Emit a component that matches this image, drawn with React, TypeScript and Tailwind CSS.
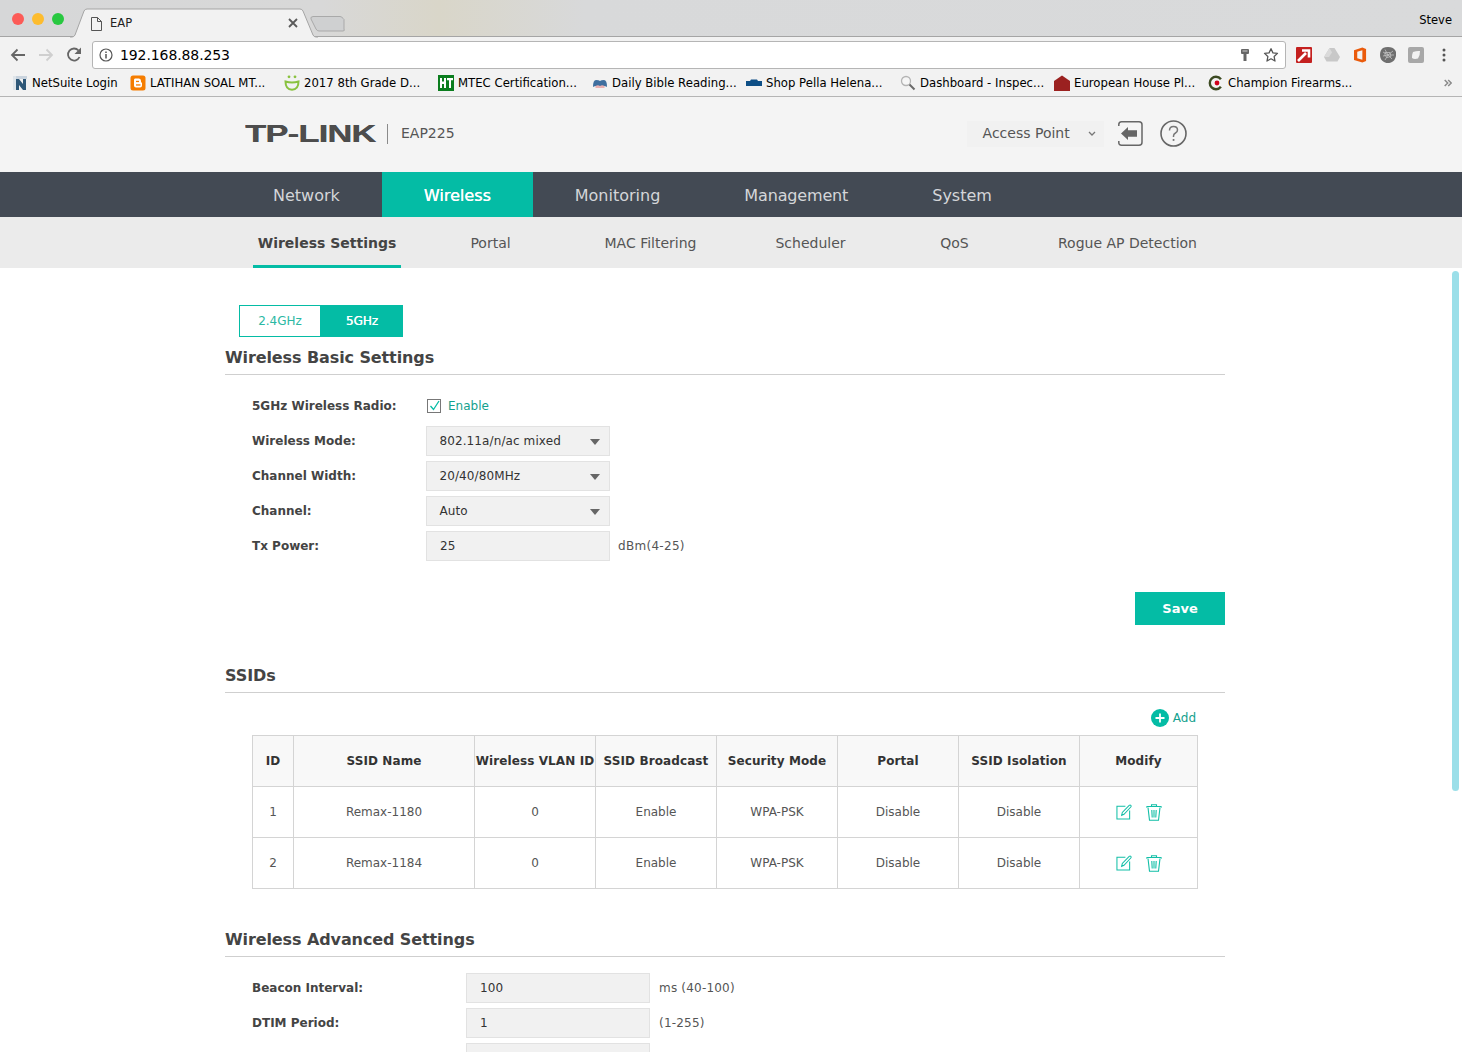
import React from "react";

const bookmarks = [
  { icon: "netsuite", label: "NetSuite Login", w: 118 },
  { icon: "blogger", label: "LATIHAN SOAL MT...", w: 154 },
  { icon: "smile", label: "2017 8th Grade D...", w: 154 },
  { icon: "ht", label: "MTEC Certification...", w: 154 },
  { icon: "bible", label: "Daily Bible Reading...", w: 154 },
  { icon: "pella", label: "Shop Pella Helena...", w: 154 },
  { icon: "search", label: "Dashboard - Inspec...", w: 154 },
  { icon: "house", label: "European House Pl...", w: 154 },
  { icon: "champion", label: "Champion Firearms...", w: 160 },
];

const FavIcon = ({ name }: { name: string }) => {
  switch (name) {
    case "netsuite":
      return (
        <svg width="16" height="16" viewBox="0 0 16 16">
          <rect x="1" y="1" width="14" height="3" fill="#c9d3dd" />
          <rect x="1" y="1" width="3" height="14" fill="#dfe5ea" />
          <path d="M4 4h3l4 5V4h3v11h-3L7 10v5H4z" fill="#2f5878" />
        </svg>
      );
    case "blogger":
      return (
        <svg width="16" height="16" viewBox="0 0 16 16">
          <rect x="0.5" y="0.5" width="15" height="15" rx="2.5" fill="#f57d00" />
          <path d="M5 3.500h4q2 0 2 2.500v1.500h1v3q0 2-2 2H6q-2 0-2-2V5q0-1.500 1-1.500z" fill="#fff" />
          <rect x="6" y="5.800" width="3" height="1.300" fill="#f57d00" />
          <rect x="6" y="9.300" width="4.500" height="1.300" fill="#f57d00" />
        </svg>
      );
    case "smile":
      return (
        <svg width="16" height="16" viewBox="0 0 16 16">
          <circle cx="5" cy="1.800" r="1.400" fill="#89c23f" />
          <circle cx="11" cy="1.800" r="1.400" fill="#89c23f" />
          <path d="M1.500 6.500q6.500 2 13 0q0 8-6.500 8.200Q1.500 14.500 1.500 6.500z" fill="none" stroke="#89c23f" strokeWidth="2" />
        </svg>
      );
    case "ht":
      return (
        <svg width="16" height="16" viewBox="0 0 16 16">
          <rect width="16" height="16" fill="#0b7d1e" />
          <path d="M2 3h2v3.500h2V3h2v10H6V9H4v4H2zM9 3h6v2.200h-2V13h-2V5.200H9z" fill="#fff" />
        </svg>
      );
    case "bible":
      return (
        <svg width="16" height="16" viewBox="0 0 16 16">
          <path d="M1 12q0-7 3-7t4 1q1-1 4-1t3 7q-3-2-7 0q-4-2-7 0z" fill="#3f6f9f" />
          <path d="M3.500 11q2.500-1.500 4.500 0q2-1.500 4.500 0v2h-9z" fill="#eab0b0" />
        </svg>
      );
    case "pella":
      return (
        <svg width="16" height="16" viewBox="0 0 16 16">
          <path d="M0 6h4l1-1.500h6L12 6h4v5H0z" fill="#0e4f86" />
        </svg>
      );
    case "search":
      return (
        <svg width="16" height="16" viewBox="0 0 16 16">
          <circle cx="6" cy="6" r="4.500" fill="#f6f6f6" stroke="#b4b4b4" strokeWidth="1.300" />
          <path d="M9.500 9.500l5 5" stroke="#6a6a6a" strokeWidth="2" />
        </svg>
      );
    case "house":
      return (
        <svg width="16" height="16" viewBox="0 0 16 16">
          <path d="M8 0.500L16 6v10H0V6z" fill="#9b2120" />
        </svg>
      );
    default:
      return (
        <svg width="16" height="16" viewBox="0 0 16 16">
          <circle cx="8" cy="8" r="6.200" fill="none" stroke="#3c4a22" strokeWidth="2.400" strokeDasharray="30 9" strokeDashoffset="-4" />
          <circle cx="9" cy="8" r="2.400" fill="#d0021b" />
        </svg>
      );
  }
};

const SelectBox = ({ value }: { value: string }) => (
  <div className="flex h-[30px] w-[184px] items-center justify-between border border-[#e2e2e2] bg-[#f1f1f1] pl-[12.5px] pr-[9px] text-[12px] tracking-[0.1px] text-[#333]">
    <span>{value}</span>
    <span className="mt-[2px] h-0 w-0 border-x-[5px] border-t-[6px] border-x-transparent border-t-[#666]" />
  </div>
);

const InputBox = ({ value }: { value: string }) => (
  <div className="flex h-[30px] w-[184px] items-center border border-[#e2e2e2] bg-[#f1f1f1] pl-[13px] text-[12px] tracking-[0.1px] text-[#333]">{value}</div>
);

const FormRow = ({ label, labelWidth, children }: { label: string; labelWidth: string; children: React.ReactNode }) => (
  <div className="flex h-[30px] items-center">
    <div className={`text-[12px] font-bold text-[#444] ${labelWidth}`}>{label}</div>
    {children}
  </div>
);

const SectionTitle = ({ children }: { children: React.ReactNode }) => (
  <h2 className="border-b border-[#cfcfcf] pt-[1px] pb-[4px] text-[16px] leading-[24px] font-bold tracking-[-0.1px] text-[#444]">{children}</h2>
);

const headers = ["ID", "SSID Name", "Wireless VLAN ID", "SSID Broadcast", "Security Mode", "Portal", "SSID Isolation", "Modify"];
const rows = [
  ["1", "Remax-1180", "0", "Enable", "WPA-PSK", "Disable", "Disable"],
  ["2", "Remax-1184", "0", "Enable", "WPA-PSK", "Disable", "Disable"],
];
const colWidths = ["w-[41px]", "w-[181px]", "w-[121px]", "w-[121px]", "w-[121px]", "w-[121px]", "w-[121px]", "w-[118px]"];

const EditIcon = () => (
  <svg width="16" height="16" viewBox="0 0 17 17" fill="none" stroke="#12bfa7" strokeWidth="1.100">
    <path d="M10 2.500H1v13.500h13.500V7" />
    <path d="M6 12l.7-3L14 1.500q1-.7 1.700 0t0 1.700L8.500 11z" />
  </svg>
);

const TrashIcon = () => (
  <svg width="16" height="17" viewBox="0 0 16 17" fill="none" stroke="#12bfa7" strokeWidth="1.100">
    <path d="M.5 3.500q0-1 1-1h13q1 0 1 1M5.500 2.500V.700h5v1.800M2 3.500l1.500 12.800h9L14 3.500" />
    <path d="M5.800 6l.4 7.500M8 6v7.500M10.200 6l-.4 7.500" />
  </svg>
);

export default function App() {
  return (
    <div className="relative h-[1052px] w-[1462px] overflow-hidden bg-white font-['DejaVu_Sans',sans-serif] text-[13px]">
      {/* title bar */}
      <div className="relative flex h-[37px] items-center justify-between border-b border-[#a5a5a5] bg-[linear-gradient(90deg,#d6d7d8_0%,#d8d8d8_22%,#d9d6c9_30%,#d8d9da_40%,#d9dadb_100%)] pl-[12px] pr-[10px] pt-[2px]">
        <div className="flex gap-[8px]">
          <span className="h-[12px] w-[12px] rounded-full bg-[#fc5b57]" />
          <span className="h-[12px] w-[12px] rounded-full bg-[#fdbc2e]" />
          <span className="h-[12px] w-[12px] rounded-full bg-[#28c840]" />
        </div>
        <span className="mt-[4px] text-[11.5px] text-black">Steve</span>
        <svg className="absolute left-[70px] top-[8px]" width="280" height="30" viewBox="0 0 280 30">
          <path d="M0 29h2q2 0 3-2L14 3q1-2 3-2h213q2 0 3 2l10 24q1 2 3 2h2" fill="#f2f2f2" stroke="#a5a5a5" />
          <path d="M243 8.500h27q2 0 3 2l1 1L274 21q1 2-1 2h-24q-2 0-3-2l-5-10q-1-2 2-2.500z" fill="#cfd0d1" stroke="#a9a9a9" />
        </svg>
        <div className="absolute left-[91px] top-[15px] flex items-center">
          <svg width="11" height="14" viewBox="0 0 11 14" fill="none" stroke="#555" strokeWidth="1">
            <path d="M.5.500h6l4 4v9H.5zM6.500.500v4h4" />
          </svg>
          <span className="ml-[8px] text-[11.5px] text-[#222]">EAP</span>
        </div>
        <svg className="absolute left-[288px] top-[18px]" width="10" height="10" viewBox="0 0 10 10" stroke="#5a5a5a" strokeWidth="1.800">
          <path d="M1 1l8 8M9 1l-8 8" />
        </svg>
      </div>

      {/* toolbar */}
      <div className="flex h-[33px] items-center bg-[#f2f2f2] pl-[10px] pr-[14px] pt-[3px]">
        <svg width="16" height="14" viewBox="0 0 16 14" fill="none" stroke="#666" strokeWidth="1.800">
          <path d="M15 7H2M7.500 1.500L2 7l5.500 5.500" />
        </svg>
        <svg className="ml-[12px]" width="16" height="14" viewBox="0 0 16 14" fill="none" stroke="#cfcfcf" strokeWidth="1.800">
          <path d="M1 7h13M8.500 1.500L14 7l-5.500 5.500" />
        </svg>
        <svg className="ml-[12px]" width="16" height="16" viewBox="0 0 16 16" fill="none">
          <path d="M13.500 10A6 6 0 1 1 12.500 3.500" stroke="#666" strokeWidth="1.800" />
          <path d="M15 0.500v6.500H8.500z" fill="#666" />
        </svg>
        <div className="ml-[10px] flex h-[28px] w-[1194px] items-center rounded-[3px] border border-[#b5b5b5] bg-white pl-[6px] pr-[6px]">
          <svg width="14" height="14" viewBox="0 0 14 14" fill="none" stroke="#555">
            <circle cx="7" cy="7" r="6" strokeWidth="1.200" />
            <path d="M7 6v4.500M7 3.500v1.500" strokeWidth="1.500" />
          </svg>
          <span className="ml-[7px] text-[14px] tracking-[-0.1px] text-black">192.168.88.253</span>
          <svg className="ml-auto" width="10" height="14" viewBox="0 0 10 14">
            <path d="M2 1h6q1 0 1 1v3q0 1-1 1H6.500v7h-3V6H2q-1 0-1-1V2q0-1 1-1z" fill="#666" />
            <rect x="2.500" y="2.500" width="5" height="1" fill="#ccc" />
          </svg>
          <svg className="ml-[13px]" width="16" height="16" viewBox="0 0 24 24" fill="none" stroke="#555" strokeWidth="1.900" strokeLinejoin="round">
            <path d="M12 2.500l2.900 6.300 6.800.8-5 4.700 1.300 6.800-6-3.400-6 3.400 1.300-6.800-5-4.700 6.800-.8z" />
          </svg>
        </div>
        <svg className="ml-[10px]" width="16" height="16" viewBox="0 0 16 16">
          <rect width="16" height="16" rx="1" fill="#c4201f" />
          <path d="M2 14L10 6M6 3.500h7v7" stroke="#fff" strokeWidth="2.600" fill="none" />
        </svg>
        <svg className="ml-[12px]" width="16" height="14" viewBox="0 0 16 14">
          <path d="M5.500 0h5l5.500 9-2.500 4.500h-11L0 9z" fill="#c8c8c8" />
          <path d="M5.500 0L8 4.500 5 9H0z" fill="#dadada" />
        </svg>
        <svg className="ml-[14px]" width="13" height="16" viewBox="0 0 14 16">
          <path d="M0 3l9-3 4 1.500v13L9 16l-9-2.500zM3.500 4.500v7l5.500 1.500V3z" fill="#ea5b0c" fillRule="evenodd" />
        </svg>
        <svg className="ml-[13px]" width="16" height="16" viewBox="0 0 16 16">
          <path d="M8 0q5 0 7 3t1 6q-1 5-5 6.500T4 15Q0 13 0 8t3-7q2-1 5-1z" fill="#6f6f6f" />
          <path d="M3 5l5 3 5-4M8 8l-3 5M8 8l4 4M5 2.500L8 8M8 8l6 0M3 9l5-1M5 5.500h5l1 4-4 1-2-2z" stroke="#c2c2c2" strokeWidth="0.800" fill="none" />
        </svg>
        <svg className="ml-[12px]" width="16" height="16" viewBox="0 0 16 16">
          <rect width="16" height="16" rx="2" fill="#a8a8a8" />
          <path d="M5 5q4-1.500 7-1 0 5-2 7.500-4 1-6-.5 0-4 1-6z" fill="#f2f2f2" />
        </svg>
        <svg className="ml-[18px]" width="4" height="14" viewBox="0 0 4 14" fill="#555">
          <circle cx="2" cy="2" r="1.500" />
          <circle cx="2" cy="7" r="1.500" />
          <circle cx="2" cy="12" r="1.500" />
        </svg>
      </div>

      {/* bookmarks */}
      <div className="flex h-[27px] items-center border-b border-[#b5b5b5] bg-[#f2f2f2] pl-[12px] text-[11.7px] text-black">
        {bookmarks.map((b) => (
          <div key={b.label} className="flex shrink-0 items-center gap-[4px]" style={{ width: b.w }}>
            <FavIcon name={b.icon} />
            <span className="pt-[2px] whitespace-nowrap">{b.label}</span>
          </div>
        ))}
        <svg className="ml-auto mr-[10px]" width="8" height="8" viewBox="0 0 8 8" fill="none" stroke="#8a8a8a" strokeWidth="1.500">
          <path d="M.7 1l3 3-3 3M4.200 1l3 3-3 3" />
        </svg>
      </div>

      {/* device header */}
      <header className="flex h-[75px] items-center bg-[#f4f4f4] pb-[2px] pl-[245px]">
        <span className="w-[130px] shrink-0 origin-left [transform:scaleX(1.43)] font-['Liberation_Sans',sans-serif] text-[24px] leading-none font-bold tracking-[-0.5px] whitespace-nowrap text-[#4d4d4d] [text-shadow:0.4px_0_0_#4d4d4d]">TP-LINK</span>
        <span className="ml-[12px] h-[20px] w-px bg-[#8a8a8a]" />
        <span className="ml-[13px] text-[14px] text-[#555]">EAP225</span>
        <div className="ml-[512px] flex h-[26px] w-[137px] items-center bg-[#f1f1f1] pl-[16px] text-[14px] text-[#555]">
          Access Point
          <svg className="ml-[18px]" width="8" height="5" viewBox="0 0 8 5" fill="none" stroke="#777" strokeWidth="1.300">
            <path d="M1 1l3 3 3-3" />
          </svg>
        </div>
        <svg className="ml-[14px]" width="25" height="25" viewBox="0 0 25 25" fill="none">
          <path d="M.8 5V3.500Q.8.800 3.500.800h17.500q3 0 3 3v17.400q0 3-3 3H3.500Q.8 24.200.8 21.500V20" stroke="#666" strokeWidth="1.500" />
          <path d="M3 12.500L10 6v3.300h9v6.400h-9V19z" fill="#666" />
        </svg>
        <svg className="ml-[17px]" width="27" height="27" viewBox="0 0 27 27" fill="none">
          <circle cx="13.500" cy="13.500" r="12.500" stroke="#666" strokeWidth="1.600" />
          <path d="M9.500 10.500q0-4 4-4t4 3.500q0 2-2 3t-2 3v1" stroke="#777" strokeWidth="1.500" />
          <rect x="12.700" y="19" width="1.700" height="1.900" fill="#777" />
        </svg>
      </header>

      {/* main nav */}
      <nav className="flex h-[45px] items-center bg-[#434a54] pl-[231px] text-[16px] text-[#d4d6d9]">
        <div className="flex h-full items-center px-[42px] pt-[2px]">Network</div>
        <div className="flex h-full items-center bg-[#04bca5] px-[42px] pt-[2px] text-white [text-shadow:0.3px_0_0_#fff]">Wireless</div>
        <div className="flex h-full items-center px-[42px] pt-[2px]">Monitoring</div>
        <div className="flex h-full items-center px-[42px] pt-[2px] tracking-[-0.15px]">Management</div>
        <div className="flex h-full items-center px-[42px] pt-[2px]">System</div>
      </nav>

      {/* sub nav */}
      <div className="flex h-[51px] bg-[#ebebeb] pl-[253px] text-[14px] text-[#555]">
        <div className="flex w-[148px] items-center justify-center border-b-[3px] border-[#04bca5] pt-[5px] font-bold text-[#444]">Wireless Settings</div>
        <div className="flex w-[179px] items-center justify-center pt-[2px]">Portal</div>
        <div className="flex w-[141px] items-center justify-center pt-[2px]">MAC Filtering</div>
        <div className="flex w-[179px] items-center justify-center pt-[2px]">Scheduler</div>
        <div className="flex w-[109px] items-center justify-center pt-[2px]">QoS</div>
        <div className="flex w-[237px] items-center justify-center pt-[2px]">Rogue AP Detection</div>
      </div>

      {/* content */}
      <main className="ml-[225px] w-[1000px] pt-[37px]">
        <div className="ml-[14px] flex h-[32px] w-[164px] text-[12px]">
          <div className="flex w-[82px] items-center justify-center border border-[#04bca5] text-[#2bb8a3]">2.4GHz</div>
          <div className="flex w-[82px] items-center justify-center bg-[#04bca5] text-white [text-shadow:0.3px_0_0_#fff]">5GHz</div>
        </div>

        <div className="mt-[8px]">
          <SectionTitle>Wireless Basic Settings</SectionTitle>
        </div>

        <div className="ml-[27px] mt-[16px] flex flex-col gap-[5px]">
          <FormRow label="5GHz Wireless Radio:" labelWidth="w-[175px]">
            <span className="flex h-[14px] w-[14px] items-center justify-center border border-[#777] bg-white">
              <svg width="12" height="12" viewBox="0 0 12 12" fill="none" stroke="#04bca5" strokeWidth="1.300">
                <path d="M2.500 6l3 3.500L11 1" />
              </svg>
            </span>
            <span className="ml-[7px] text-[12px] text-[#14a18e]">Enable</span>
          </FormRow>
          <FormRow label="Wireless Mode:" labelWidth="w-[174px]">
            <SelectBox value="802.11a/n/ac mixed" />
          </FormRow>
          <FormRow label="Channel Width:" labelWidth="w-[174px]">
            <SelectBox value="20/40/80MHz" />
          </FormRow>
          <FormRow label="Channel:" labelWidth="w-[174px]">
            <SelectBox value="Auto" />
          </FormRow>
          <FormRow label="Tx Power:" labelWidth="w-[174px]">
            <InputBox value="25" />
            <span className="ml-[8px] text-[12px] tracking-[0.3px] text-[#555]">dBm(4-25)</span>
          </FormRow>
        </div>

        <div className="mt-[31px] flex justify-end">
          <button className="h-[33px] w-[90px] bg-[#04bca5] text-[13px] font-bold text-white">Save</button>
        </div>

        <div className="mt-[38px]">
          <SectionTitle>SSIDs</SectionTitle>
        </div>

        <div className="mr-[29px] mt-[16px] flex items-center justify-end gap-[4px] text-[12px] text-[#14a18e]">
          <svg width="18" height="18" viewBox="0 0 18 18">
            <circle cx="9" cy="9" r="9" fill="#04bca5" />
            <path d="M9 4.500v9M4.500 9h9" stroke="#fff" strokeWidth="1.800" />
          </svg>
          Add
        </div>

        <table className="ml-[27px] mt-[8px] w-[945px] table-fixed border-collapse text-center text-[12px] text-[#555]">
          <thead>
            <tr className="h-[51px] bg-[#f8f8f8] text-[#333]">
              {headers.map((h, i) => (
                <th key={h} className={`border border-[#d4d4d4] px-0 font-bold tracking-[0.1px] whitespace-nowrap ${colWidths[i]}`}>{h}</th>
              ))}
            </tr>
          </thead>
          <tbody>
            {rows.map((r) => (
              <tr key={r[0]} className="h-[51px]">
                {r.map((c, i) => (
                  <td key={i} className="border border-[#d4d4d4]">{c}</td>
                ))}
                <td className="border border-[#d4d4d4]">
                  <div className="flex items-center justify-center gap-[14px]">
                    <EditIcon />
                    <TrashIcon />
                  </div>
                </td>
              </tr>
            ))}
          </tbody>
        </table>

        <div className="mt-[38px]">
          <SectionTitle>Wireless Advanced Settings</SectionTitle>
        </div>

        <div className="ml-[27px] mt-[16px] flex flex-col gap-[5px]">
          <FormRow label="Beacon Interval:" labelWidth="w-[214px]">
            <InputBox value="100" />
            <span className="ml-[9px] text-[12px] tracking-[0.2px] text-[#555]">ms (40-100)</span>
          </FormRow>
          <FormRow label="DTIM Period:" labelWidth="w-[214px]">
            <InputBox value="1" />
            <span className="ml-[9px] text-[12px] tracking-[0.2px] text-[#555]">(1-255)</span>
          </FormRow>
          <FormRow label="" labelWidth="w-[214px]">
            <InputBox value="" />
          </FormRow>
        </div>
      </main>

      {/* overlay scrollbar */}
      <div className="absolute left-[1452px] top-[271px] h-[520px] w-[7px] rounded-full bg-[#9bdfe9]" />
    </div>
  );
}
